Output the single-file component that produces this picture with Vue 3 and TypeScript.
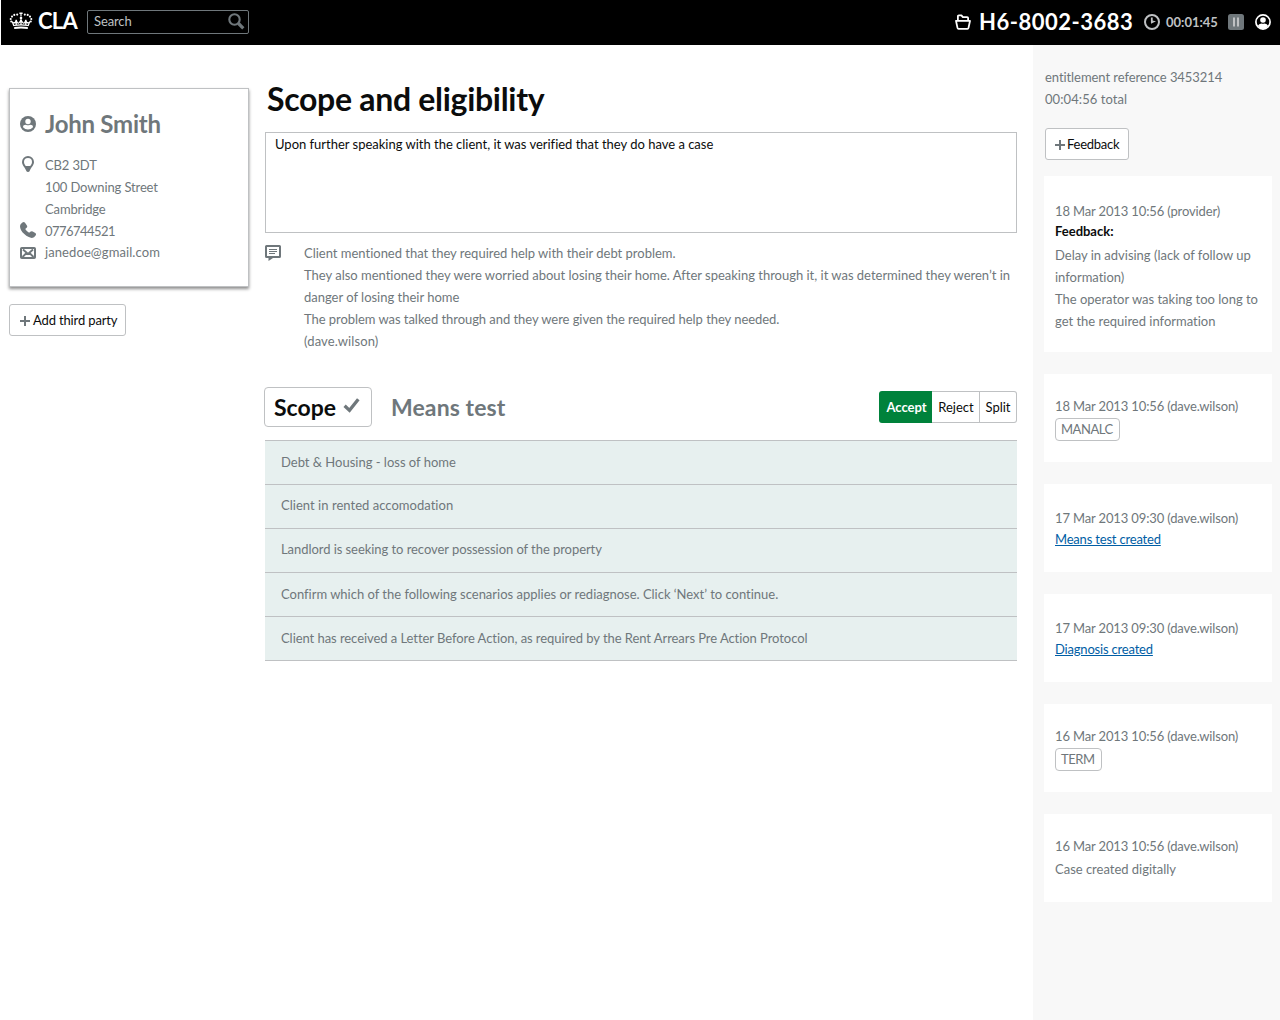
<script setup lang="ts">
interface LogEntry {
  date: string
  author: string
  code?: string
  link?: string
  title?: string
  lines?: string[]
}

const notes: string[] = [
  'Client mentioned that they required help with their debt problem.',
  'They also mentioned they were worried about losing their home. After speaking through it, it was determined they weren’t in',
  'danger of losing their home',
  'The problem was talked through and they were given the required help they needed.',
  '(dave.wilson)',
]

const scopeRows: string[] = [
  'Debt & Housing - loss of home',
  'Client in rented accomodation',
  'Landlord is seeking to recover possession of the property',
  'Confirm which of the following scenarios applies or rediagnose. Click ‘Next’ to continue.',
  'Client has received a Letter Before Action, as required by the Rent Arrears Pre Action Protocol',
]

const log: LogEntry[] = [
  {
    date: '18 Mar 2013 10:56',
    author: 'provider',
    title: 'Feedback:',
    lines: [
      'Delay in advising (lack of follow up',
      'information)',
      'The operator was taking too long to',
      'get the required information',
    ],
  },
  { date: '18 Mar 2013 10:56', author: 'dave.wilson', code: 'MANALC' },
  { date: '17 Mar 2013 09:30', author: 'dave.wilson', link: 'Means test created' },
  { date: '17 Mar 2013 09:30', author: 'dave.wilson', link: 'Diagnosis created' },
  { date: '16 Mar 2013 10:56', author: 'dave.wilson', code: 'TERM' },
  { date: '16 Mar 2013 10:56', author: 'dave.wilson', lines: ['Case created digitally'] },
]
</script>

<template>
  <div class="app">
    <header class="bar">
      <svg class="crown" width="24" height="18" viewBox="0 0 24 18" fill="#fff">
        <path d="M10.400 0.600h3.200v1.400h-1v2.600h-1.200V2h-1z" />
        <circle cx="8.200" cy="2.600" r="1.050" />
        <circle cx="5.300" cy="2.900" r="1.050" />
        <circle cx="3" cy="4.600" r="1.050" />
        <circle cx="1.700" cy="7" r="1.050" />
        <circle cx="2.200" cy="9.600" r="1" />
        <circle cx="15.800" cy="2.600" r="1.050" />
        <circle cx="18.700" cy="2.900" r="1.050" />
        <circle cx="21" cy="4.600" r="1.050" />
        <circle cx="22.300" cy="7" r="1.050" />
        <circle cx="21.800" cy="9.600" r="1" />
        <circle cx="12" cy="6" r="1.300" />
        <path d="M3.200 9.500 5 14M20.800 9.500 19 14M4.400 10.500q2 1.200 2.800-2.700 1 4 2.600 3.200 1.500-.6 2.200-3.500.7 2.900 2.200 3.500 1.600.8 2.600-3.200.800 3.900 2.800 2.700M7.200 8v5M12 7.500V13M16.800 8v5" fill="none" stroke="#fff" stroke-width="1.300" />
        <path d="M4.800 13q7.200-1.600 14.400 0l-.3 1.100q-6.900-1.400-13.800 0zM5.200 15.100q6.800-1.400 13.600 0v2q-6.800-1.300-13.600 0z" />
      </svg>
      <span class="brand">CLA</span>
      <div class="search">
        <span>Search</span>
        <svg width="17" height="17" viewBox="0 0 17 17" fill="none" stroke="#6f777b">
          <circle cx="6.500" cy="6.500" r="5.200" stroke-width="2.100" />
          <path d="M10.500 10.500 15.300 15.300" stroke-width="3.200" />
        </svg>
      </div>
      <div class="session">
        <svg class="folder" width="16" height="16" viewBox="0 0 16 16" fill="none" stroke="#fff" stroke-width="1.800" stroke-linejoin="round">
          <path d="M2.900 6.500V2.200q0-.9.900-.9h2.600l1.500 1.800h4.300q.9 0 .9.900v2.500" />
          <path d="M1 6.900h14l-1.500 7q-.2.900-1 .900h-9q-.8 0-1-.900z" />
        </svg>
        <span class="case-ref">H6-8002-3683</span>
        <svg class="clock" width="16" height="16" viewBox="0 0 16 16" fill="none" stroke="#bfc1c3">
          <circle cx="8" cy="8" r="7" stroke-width="2" />
          <path d="M7.800 3.500v5.200" stroke-width="1.800" />
          <path d="M7 9.800V6.200L12 7.300z" fill="#bfc1c3" stroke="none" />
        </svg>
        <span class="timer">00:01:45</span>
        <svg class="pause" width="16" height="16" viewBox="0 0 16 16">
          <rect width="16" height="16" rx="2.500" fill="#6f777b" />
          <path d="M5 3.500h2v9H5zM9 3.500h2v9H9z" fill="#bfc1c3" />
        </svg>
        <svg width="16" height="16" viewBox="0 0 16 16">
          <circle cx="8" cy="8" r="7.100" fill="none" stroke="#fff" stroke-width="1.700" />
          <circle cx="8" cy="6" r="2.800" fill="#fff" />
          <path d="M2.800 12q1-2.600 3.600-2.600 1.600.8 3.200 0 2.600 0 3.600 2.600-2.200 2.900-5.200 2.900T2.800 12z" fill="#fff" />
        </svg>
      </div>
    </header>

    <div class="body">
      <aside class="left">
        <section class="person">
          <div class="name">
            <svg width="16" height="16" viewBox="0 0 16 16">
              <circle cx="8" cy="8" r="8" fill="#6f777b" />
              <circle cx="8" cy="5.500" r="2.700" fill="#fff" />
              <path d="M3 11.200q0-2.400 3-2.400 2 1 4 0 3 0 3 2.400-2 2.200-5 2.200t-5-2.200z" fill="#fff" />
            </svg>
            <h2>John Smith</h2>
          </div>
          <div class="detail">
            <svg class="pin" width="16" height="16" viewBox="0 0 16 16">
              <path fill="#6f777b" fill-rule="evenodd" d="M8 0a6 6 0 0 1 6 6c0 3.300-3.200 5.600-4.500 9.200q-.3.800-1.500.8t-1.500-.8C5.200 11.600 2 9.300 2 6a6 6 0 0 1 6-6zm0 2a4 4 0 0 0-4 4c0 1.800 1 2.900 1.800 4h4.400C11 8.900 12 7.800 12 6a4 4 0 0 0-4-4z" />
            </svg>
            <div class="address">
              <div>CB2 3DT</div>
              <div>100 Downing Street</div>
              <div>Cambridge</div>
            </div>
          </div>
          <div class="detail">
            <svg class="phone" width="16" height="16" viewBox="0 0 16 16" fill="#6f777b">
              <path d="M0 4Q0 2 2.400.5 4-.4 5 .8l1.900 2.600q.8 1.300-.3 2.300L5.200 7q1.500 2.500 3.900 3.700l1.200-1q1.100-.9 2.400-.3l2.600 1.500q1.300 1 .3 2.500-1.300 2.300-3.700 2.500-3.500 0-7.600-3.800Q0 8.400 0 4z" />
            </svg>
            <div class="tel">0776744521</div>
          </div>
          <div class="detail">
            <svg class="mail" width="16" height="12" viewBox="0 0 16 12" fill="none" stroke="#6f777b">
              <rect x="1" y="1" width="14" height="10" rx=".8" stroke-width="2" />
              <path d="M3 2.500 8 7l5-4.500M2.500 10l3.800-3.800M13.500 10 9.700 6.200" stroke-width="1.900" />
            </svg>
            <div class="email">janedoe@gmail.com</div>
          </div>
        </section>
        <button class="btn add-party">
          <svg width="10" height="10" viewBox="0 0 10 10"><path d="M4 0h2v4h4v2H6v4H4V6H0V4h4z" fill="#6f777b" /></svg>
          <span>Add third party</span>
        </button>
      </aside>

      <main class="main">
        <h1>Scope and eligibility</h1>
        <div class="summary">Upon further speaking with the client, it was verified that they do have a case</div>
        <div class="notes">
          <svg width="16" height="16" viewBox="0 0 16 16">
            <path fill="#6f777b" fill-rule="evenodd" d="M1.500 0h13A1.500 1.500 0 0 1 16 1.500v10a1.500 1.500 0 0 1-1.500 1.500H8L3.500 16v-3h-2A1.500 1.500 0 0 1 0 11.500v-10A1.500 1.500 0 0 1 1.500 0zM2 2v9h12V2zM4 4h8v1H4zM4 6h8v1H4zM4 8h6v1H4z" />
          </svg>
          <div class="note-text">
            <div v-for="line in notes" :key="line">{{ line }}</div>
          </div>
        </div>

        <div class="tabs">
          <div class="tab active">
            <span>Scope</span>
            <svg width="17" height="16" viewBox="0 0 17 16"><path d="M1.600 7.800 6.500 12.400 15.300 1.300" fill="none" stroke="#6f777b" stroke-width="3.300" /></svg>
          </div>
          <div class="tab means">Means test</div>
          <div class="actions">
            <button class="accept">Accept</button>
            <button class="reject">Reject</button>
            <button class="split">Split</button>
          </div>
        </div>

        <ul class="rows">
          <li v-for="row in scopeRows" :key="row">{{ row }}</li>
        </ul>
      </main>

      <aside class="right">
        <div class="ref">
          <div>entitlement reference 3453214</div>
          <div class="total">00:04:56 total</div>
        </div>
        <button class="btn feedback">
          <svg width="10" height="10" viewBox="0 0 10 10"><path d="M4 0h2v4h4v2H6v4H4V6H0V4h4z" fill="#6f777b" /></svg>
          <span>Feedback</span>
        </button>
        <article
          v-for="(entry, i) in log"
          :key="i"
          class="entry"
          :class="{ titled: entry.title, linked: entry.link }"
        >
          <div class="stamp">{{ entry.date }} ({{ entry.author }})</div>
          <div v-if="entry.title" class="title">{{ entry.title }}</div>
          <span v-if="entry.code" class="code">{{ entry.code }}</span>
          <a v-if="entry.link" class="link" href="#">{{ entry.link }}</a>
          <div v-if="entry.lines" class="lines">
            <div v-for="line in entry.lines" :key="line">{{ line }}</div>
          </div>
        </article>
      </aside>
    </div>
  </div>
</template>

<style>
body {
  background: #fff;
}
</style>

<style scoped>
* {
  box-sizing: border-box;
}
.app {
  width: 1280px;
  height: 1020px;
  display: flex;
  flex-direction: column;
  overflow: hidden;
  font: 13px/22px Lato, "Noto Sans", sans-serif;
  font-variant-ligatures: none;
  letter-spacing: -0.010px;
  color: #6f777b;
  white-space: nowrap;
}
svg {
  display: block;
  flex: none;
}
h1,
h2,
ul {
  margin: 0;
  padding: 0;
}
button {
  font: inherit;
  letter-spacing: inherit;
  padding: 0;
}
.bar {
  height: 45px;
  margin-left: 1px;
  padding: 0 9px 0 8px;
  background: #000;
  display: flex;
  flex: none;
  align-items: flex-start;
}
.crown {
  margin-top: 12px;
}
.brand {
  margin: 10px 0 0 5px;
  width: 40px;
  font-size: 22px;
  font-weight: 700;
  color: #fff;
  letter-spacing: -0.700px;
}
.search {
  margin: 10px 0 0 9px;
  width: 162px;
  height: 24px;
  padding: 0 3px 2px 6px;
  border: 1px solid #6f777b;
  border-radius: 2px;
  display: flex;
  align-items: center;
  justify-content: space-between;
  color: #bfc1c3;
  letter-spacing: -0.120px;
}
.search svg {
  margin-top: 1px;
}
.session {
  margin: 11px 0 0 auto;
  height: 22px;
  display: flex;
  align-items: center;
}
.case-ref {
  margin-left: 8px;
  width: 156px;
  font-size: 22px;
  font-weight: 700;
  letter-spacing: 0.500px;
  color: #fff;
}
.clock {
  margin-left: 9px;
}
.timer {
  margin-left: 6px;
  width: 53px;
  font-weight: 700;
  color: #bfc1c3;
}
.pause {
  margin: 0 11px 0 9px;
}
.body {
  flex: 1;
  display: flex;
}
.left {
  width: 265px;
  padding: 43px 16px 0 9px;
}
.person {
  height: 199px;
  padding: 20px 10px 0;
  border: 1px solid #bfc1c3;
  box-shadow: 0 2px 3px rgba(0, 0, 0, 0.450);
}
.name {
  display: flex;
  align-items: center;
  height: 30px;
  margin-bottom: 15px;
}
.name h2 {
  margin-left: 9px;
  font-size: 24px;
  font-weight: 700;
  line-height: 30px;
  letter-spacing: -0.250px;
}
.detail {
  display: flex;
  gap: 9px;
}
.pin {
  margin-top: 2px;
}
.phone {
  margin-top: 2px;
}
.mail {
  margin-top: 5px;
}
.address {
  letter-spacing: -0.130px;
}
.tel {
  letter-spacing: -0.540px;
}
.email {
  line-height: 21px;
  letter-spacing: 0.090px;
}
.btn {
  display: flex;
  align-items: center;
  height: 32px;
  padding-left: 10px;
  background: #fff;
  border: 1px solid #bfc1c3;
  border-radius: 3px;
  color: #0b0c0c;
}
.btn svg {
  margin-top: 1px;
}
.add-party {
  width: 117px;
  margin-top: 17px;
  letter-spacing: -0.140px;
}
.add-party span {
  margin-left: 3px;
}
.main {
  width: 752px;
}
h1 {
  margin: 34px 0 0 2px;
  font-size: 32px;
  line-height: 40px;
  font-weight: 700;
  letter-spacing: -0.300px;
  color: #0b0c0c;
}
.summary {
  height: 101px;
  margin-top: 13px;
  padding: 0 9px;
  border: 1px solid #bfc1c3;
  color: #0b0c0c;
}
.notes {
  display: flex;
  gap: 23px;
  margin-top: 9px;
}
.notes svg {
  margin-top: 3px;
}
.note-text div:nth-child(4) {
  letter-spacing: -0.050px;
}
.note-text div:nth-child(5) {
  letter-spacing: 0.130px;
}
.tabs {
  display: flex;
  height: 40px;
  margin: 35px 0 13px -1px;
}
.tab {
  font-size: 23px;
  font-weight: 700;
  line-height: 40px;
}
.active {
  width: 108px;
  display: flex;
  align-items: center;
  gap: 7px;
  padding-left: 9px;
  border: 1px solid #bfc1c3;
  border-radius: 4px;
  color: #0b0c0c;
}
.active svg {
  margin-top: -2px;
}
.means {
  margin-left: 19px;
  letter-spacing: 0.100px;
}
.actions {
  display: flex;
  margin: 4px 0 0 auto;
}
.actions button {
  height: 32px;
  padding-bottom: 1px;
  border: 1px solid #bfc1c3;
  border-left-width: 0;
  background: #fff;
  color: #0b0c0c;
}
.actions .accept {
  width: 53px;
  padding-left: 2px;
  border: 0;
  border-radius: 3px 0 0 3px;
  background: #00823b;
  color: #fff;
  font-weight: 700;
}
.actions .reject {
  width: 48px;
  padding-left: 1px;
}
.actions .split {
  width: 37px;
  border-radius: 0 3px 3px 0;
}
.rows {
  list-style: none;
  border-top: 1px solid #bfc1c3;
}
.rows li {
  height: 44px;
  padding-left: 16px;
  line-height: 43px;
  background: #e7f0ef;
  border-bottom: 1px solid #bfc1c3;
}
.rows li:nth-child(2),
.rows li:nth-child(3) {
  line-height: 41px;
}
.rows li:nth-child(2) {
  letter-spacing: 0.030px;
}
.rows li:nth-child(3),
.rows li:last-child {
  letter-spacing: -0.060px;
}
.right {
  width: 247px;
  margin-left: auto;
  padding: 21px 8px 0 11px;
  background: #f8f8f8;
}
.ref {
  padding-left: 1px;
  letter-spacing: -0.070px;
}
.total {
  letter-spacing: 0.080px;
}
.feedback {
  width: 84px;
  margin: 18px 0 16px 1px;
  padding-left: 9px;
  letter-spacing: -0.250px;
}
.feedback span {
  margin-left: 2px;
}
.entry {
  height: 88px;
  margin-bottom: 22px;
  padding: 21px 0 0 11px;
  background: #fff;
}
.titled {
  height: 176px;
  padding-top: 24px;
}
.linked {
  padding-top: 23px;
}
.stamp {
  letter-spacing: -0.140px;
}
.title {
  margin: -2px 0 2px;
  font-weight: 700;
  color: #0b0c0c;
}
.code {
  display: block;
  width: fit-content;
  height: 23px;
  margin-top: 1px;
  padding: 0 6px 0 5px;
  border: 1px solid #bfc1c3;
  border-radius: 4px;
  line-height: 21px;
  letter-spacing: -0.450px;
}
.entry:last-child .lines {
  margin-top: 1px;
}
.link {
  display: block;
  margin-top: -1px;
  width: fit-content;
  letter-spacing: -0.190px;
  color: #005ea5;
  text-decoration: underline;
}
</style>
